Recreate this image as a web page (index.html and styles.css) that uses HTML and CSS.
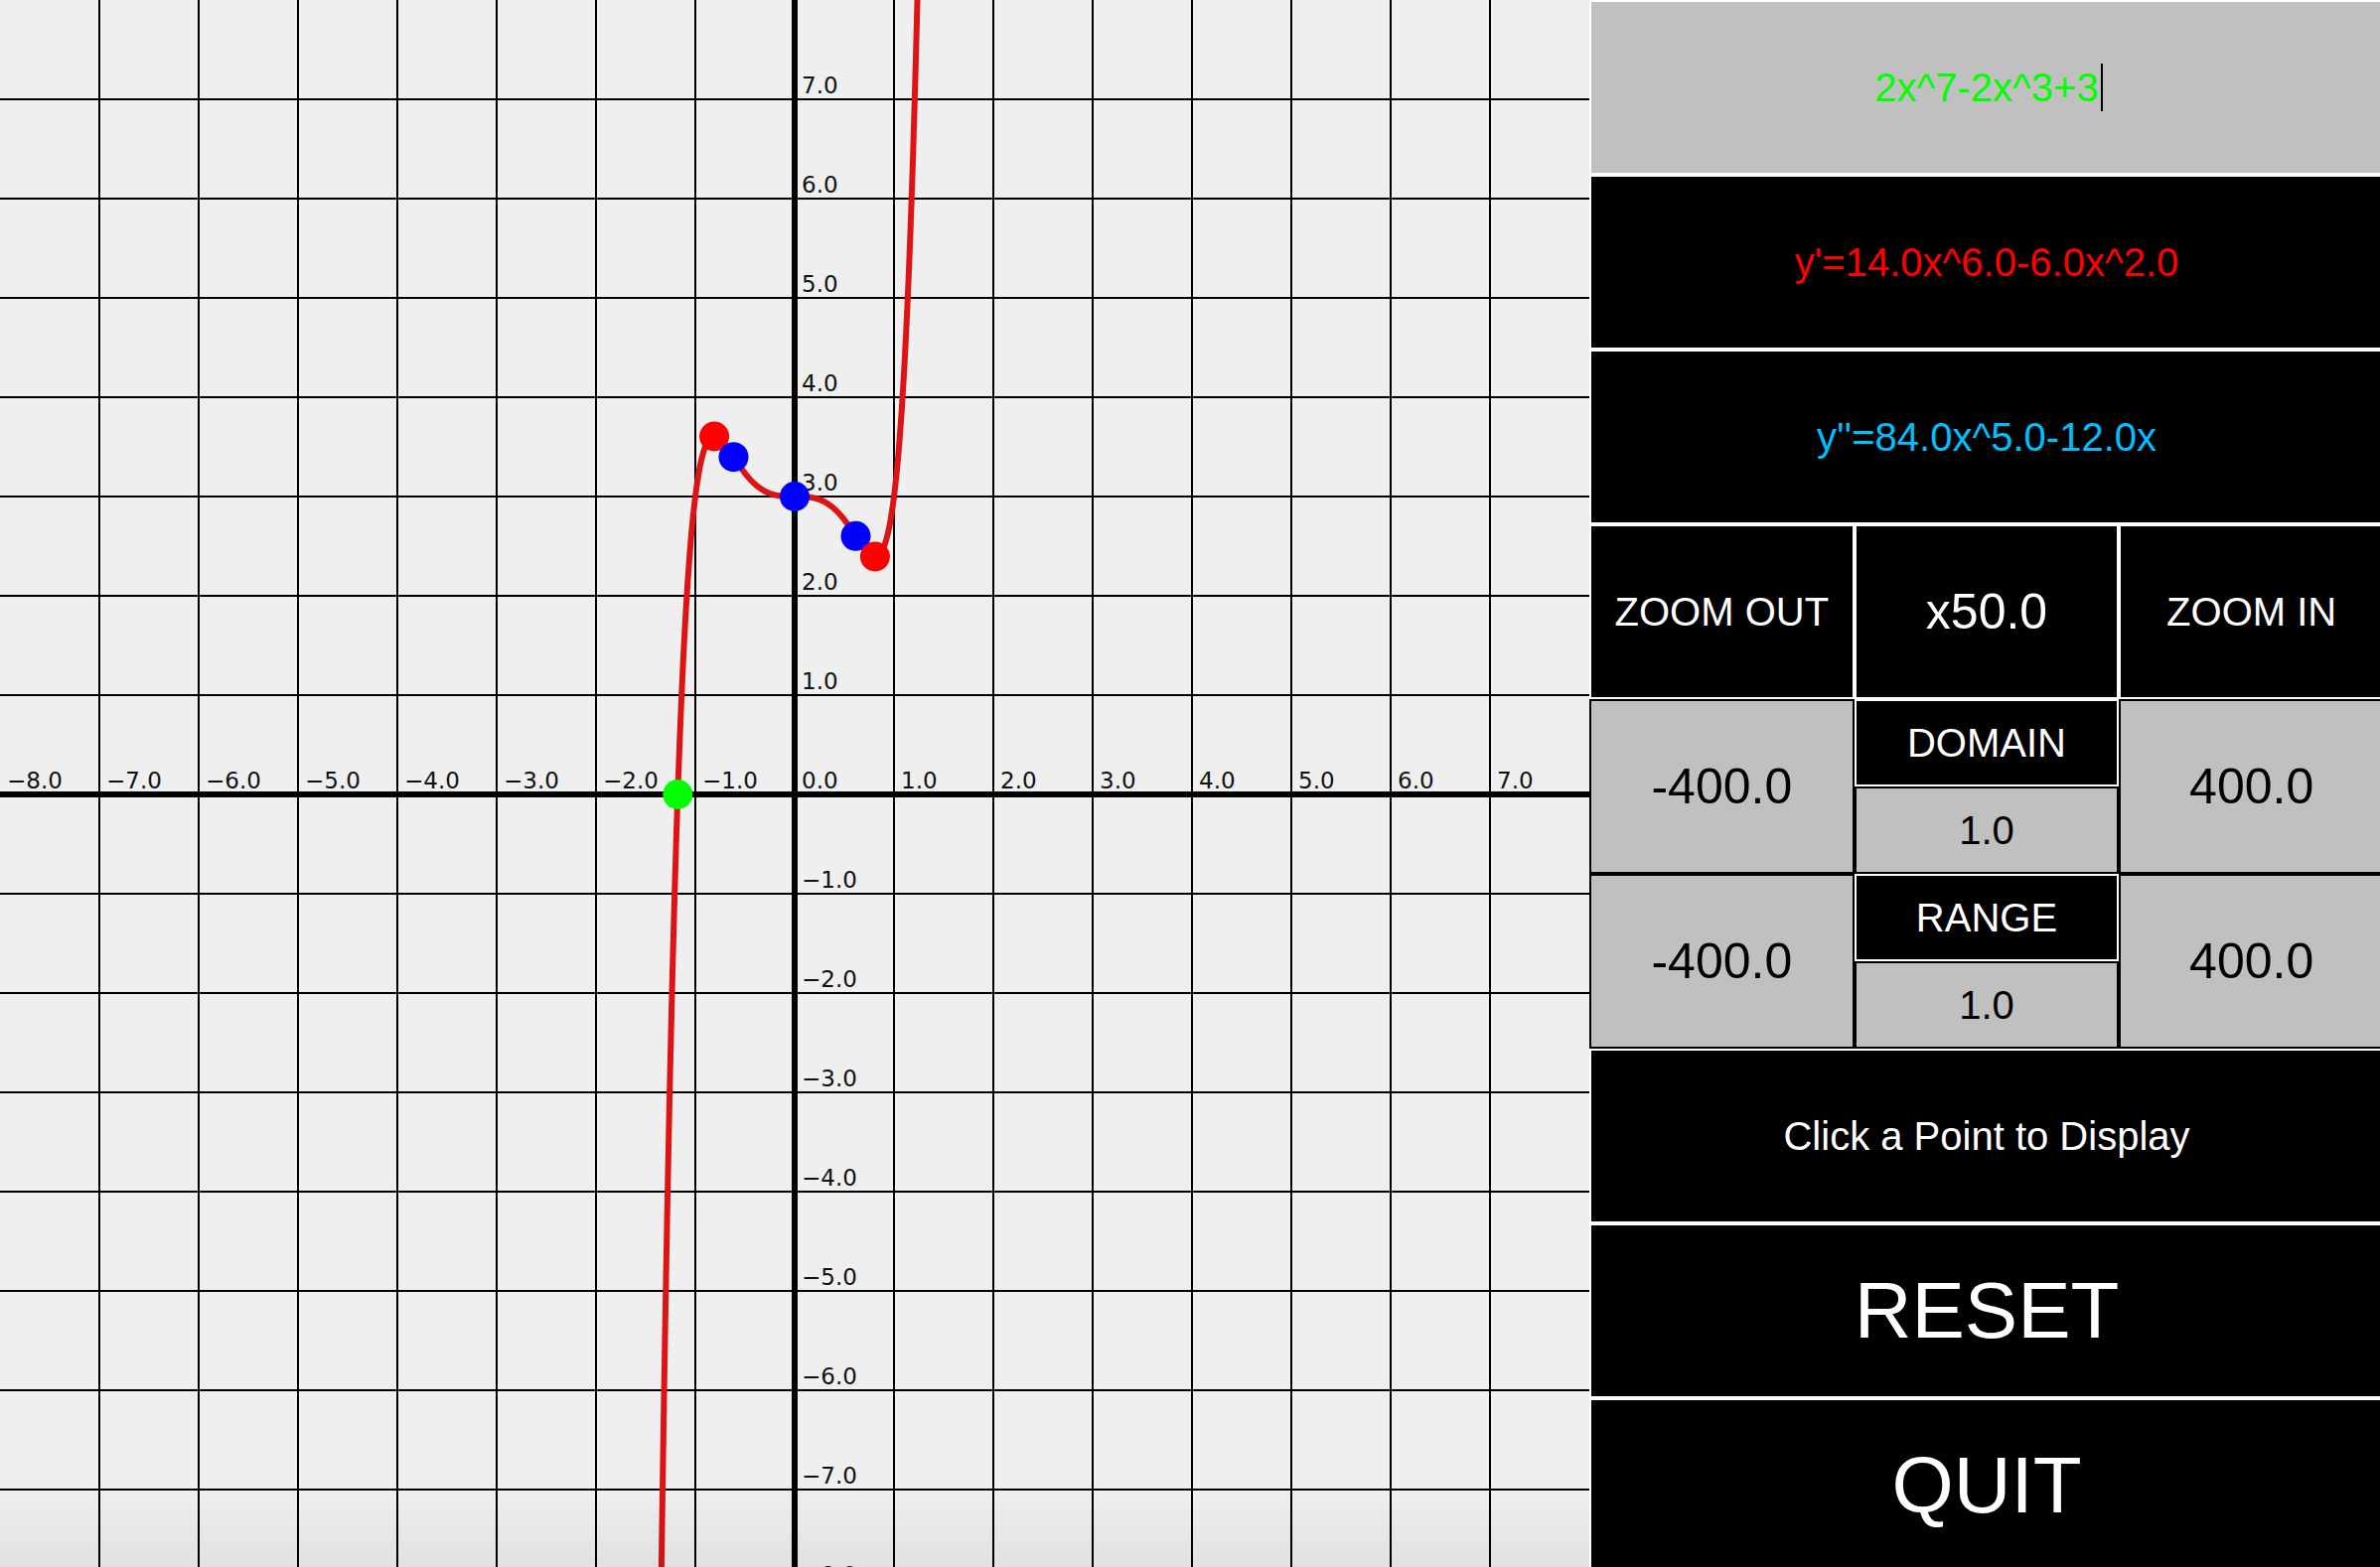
FILE: index.html
```html
<!DOCTYPE html>
<html lang="en">
<head>
<meta charset="utf-8">
<title>Grapher</title>
<link rel="stylesheet" href="styles.css">
</head>
<body>
<div class="app">
  <div class="canvas">
    <svg class="plot" width="1600" height="1584" viewBox="0 0 1600 1584">
      <g class="grid">
        <line x1="100" y1="0" x2="100" y2="1584"/>
        <line x1="200" y1="0" x2="200" y2="1584"/>
        <line x1="300" y1="0" x2="300" y2="1584"/>
        <line x1="400" y1="0" x2="400" y2="1584"/>
        <line x1="500" y1="0" x2="500" y2="1584"/>
        <line x1="600" y1="0" x2="600" y2="1584"/>
        <line x1="700" y1="0" x2="700" y2="1584"/>
        <line x1="900" y1="0" x2="900" y2="1584"/>
        <line x1="1000" y1="0" x2="1000" y2="1584"/>
        <line x1="1100" y1="0" x2="1100" y2="1584"/>
        <line x1="1200" y1="0" x2="1200" y2="1584"/>
        <line x1="1300" y1="0" x2="1300" y2="1584"/>
        <line x1="1400" y1="0" x2="1400" y2="1584"/>
        <line x1="1500" y1="0" x2="1500" y2="1584"/>
        <line x1="0" y1="100" x2="1600" y2="100"/>
        <line x1="0" y1="200" x2="1600" y2="200"/>
        <line x1="0" y1="300" x2="1600" y2="300"/>
        <line x1="0" y1="400" x2="1600" y2="400"/>
        <line x1="0" y1="500" x2="1600" y2="500"/>
        <line x1="0" y1="600" x2="1600" y2="600"/>
        <line x1="0" y1="700" x2="1600" y2="700"/>
        <line x1="0" y1="900" x2="1600" y2="900"/>
        <line x1="0" y1="1000" x2="1600" y2="1000"/>
        <line x1="0" y1="1100" x2="1600" y2="1100"/>
        <line x1="0" y1="1200" x2="1600" y2="1200"/>
        <line x1="0" y1="1300" x2="1600" y2="1300"/>
        <line x1="0" y1="1400" x2="1600" y2="1400"/>
        <line x1="0" y1="1500" x2="1600" y2="1500"/>
      </g>
      <g class="axes">
        <line x1="800" y1="0" x2="800" y2="1584"/>
        <line x1="0" y1="800" x2="1600" y2="800"/>
      </g>
      <g class="labels">
        <text x="807" y="94">7.0</text>
        <text x="807" y="194">6.0</text>
        <text x="807" y="294">5.0</text>
        <text x="807" y="394">4.0</text>
        <text x="807" y="494">3.0</text>
        <text x="807" y="594">2.0</text>
        <text x="807" y="694">1.0</text>
        <text x="807" y="794">0.0</text>
        <text x="807" y="894">−1.0</text>
        <text x="807" y="994">−2.0</text>
        <text x="807" y="1094">−3.0</text>
        <text x="807" y="1194">−4.0</text>
        <text x="807" y="1294">−5.0</text>
        <text x="807" y="1394">−6.0</text>
        <text x="807" y="1494">−7.0</text>
        <text x="807" y="1594">−8.0</text>
        <text x="7" y="794">−8.0</text>
        <text x="107" y="794">−7.0</text>
        <text x="207" y="794">−6.0</text>
        <text x="307" y="794">−5.0</text>
        <text x="407" y="794">−4.0</text>
        <text x="507" y="794">−3.0</text>
        <text x="607" y="794">−2.0</text>
        <text x="707" y="794">−1.0</text>
        <text x="907" y="794">1.0</text>
        <text x="1007" y="794">2.0</text>
        <text x="1107" y="794">3.0</text>
        <text x="1207" y="794">4.0</text>
        <text x="1307" y="794">5.0</text>
        <text x="1407" y="794">6.0</text>
        <text x="1507" y="794">7.0</text>
      </g>
      <path id="curve" class="curve" d=""/>
      <g class="dots">
        <circle class="root" cx="682.3" cy="800" r="15"/>
        <circle class="extremum" cx="719.1" cy="439.5" r="15"/>
        <circle class="inflect" cx="738.5" cy="460.2" r="15"/>
        <circle class="inflect" cx="800" cy="500" r="15"/>
        <circle class="inflect" cx="861.5" cy="539.8" r="15"/>
        <circle class="extremum" cx="880.9" cy="560.5" r="15"/>
      </g>
    </svg>
  </div>
  <div class="panel">
    <div class="cell input"><span class="typed">2x^7-2x^3+3</span></div>
    <div class="cell deriv1">y'=14.0x^6.0-6.0x^2.0</div>
    <div class="cell deriv2">y''=84.0x^5.0-12.0x</div>
    <div class="row3">
      <div class="cell">ZOOM OUT</div>
      <div class="cell big">x50.0</div>
      <div class="cell">ZOOM IN</div>
    </div>
    <div class="row3">
      <div class="cell field big">-400.0</div>
      <div class="mid">
        <div class="cell">DOMAIN</div>
        <div class="cell field">1.0</div>
      </div>
      <div class="cell field big">400.0</div>
    </div>
    <div class="row3">
      <div class="cell field big">-400.0</div>
      <div class="mid">
        <div class="cell">RANGE</div>
        <div class="cell field">1.0</div>
      </div>
      <div class="cell field big">400.0</div>
    </div>
    <div class="cell">Click a Point to Display</div>
    <div class="cell huge">RESET</div>
    <div class="cell huge">QUIT</div>
  </div>
</div>
<script src="script.js"></script>
</body>
</html>
```
FILE: styles.css
```css
html, body {
  margin: 0;
  padding: 0;
  overflow: hidden;
  background: #efefef;
}
.app {
  display: flex;
  width: 2400px;
  height: 1584px;
}
.canvas {
  position: relative;
  flex: none;
  width: 1600px;
  height: 1584px;
  background: #efefef;
  overflow: hidden;
}
.canvas::after {
  content: "";
  position: absolute;
  left: 0;
  right: 0;
  bottom: 6px;
  height: 80px;
  background: linear-gradient(to bottom, rgba(0,0,0,0), rgba(0,0,0,0.06));
  pointer-events: none;
}
.plot {
  display: block;
}
.grid line {
  stroke: #000;
  stroke-width: 2;
}
.axes line {
  stroke: #000;
  stroke-width: 6;
}
.labels text {
  font-family: "DejaVu Sans", "Liberation Sans", sans-serif;
  font-size: 23px;
  fill: #111;
}
.curve {
  fill: none;
  stroke: #dc1414;
  stroke-width: 6;
  stroke-linejoin: round;
  stroke-linecap: round;
}
.root { fill: #00ff00; }
.extremum { fill: #ff0000; }
.inflect { fill: #0000ff; }

.panel {
  flex: none;
  width: 800px;
  height: 1584px;
  display: grid;
  grid-template-rows: repeat(9, 176px);
  background: #fff;
}
.cell {
  box-sizing: border-box;
  border: 2px solid #fff;
  background: #000;
  color: #fff;
  display: flex;
  align-items: center;
  justify-content: center;
  font-family: "Liberation Sans", Arial, sans-serif;
  font-size: 40px;
  white-space: nowrap;
  min-width: 0;
  min-height: 0;
}
.input {
  background: #c0c0c0;
  color: #00ff00;
}
.typed {
  position: relative;
}
.typed::after {
  content: "";
  position: absolute;
  right: -4px;
  top: 50%;
  margin-top: -24px;
  width: 2px;
  height: 48px;
  background: #000;
}
.deriv1 { color: #ff0000; }
.deriv2 { color: #00bfff; }
.row3 {
  display: grid;
  grid-template-columns: repeat(3, 1fr);
  min-height: 0;
}
.mid {
  display: grid;
  grid-template-rows: 1fr 1fr;
  min-height: 0;
}
.field {
  background: #c0c0c0;
  color: #000;
  border-color: #000;
}
.big { font-size: 50px; }
.huge { font-size: 80px; }
```
FILE: script.js
```js
(function () {
  var path = document.getElementById('curve');
  var d = '';
  for (var i = 0; i <= 1300; i++) {
    var x = -1.36 + i * 0.002;
    var y = 2 * Math.pow(x, 7) - 2 * Math.pow(x, 3) + 3;
    var X = 800 + 100 * x;
    var Y = 800 - 100 * y;
    d += (i === 0 ? 'M' : 'L') + X.toFixed(2) + ' ' + Y.toFixed(2);
  }
  path.setAttribute('d', d);
})();
```
